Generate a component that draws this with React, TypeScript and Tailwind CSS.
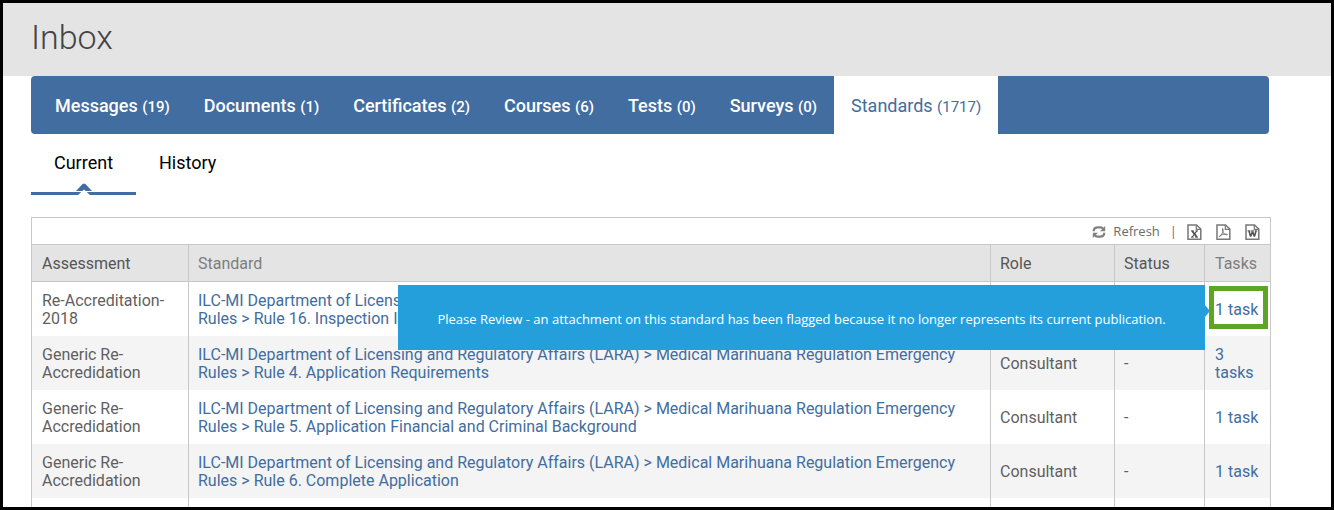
import React from "react";

const tabs = [
  { name: "Messages", count: 19 },
  { name: "Documents", count: 1 },
  { name: "Certificates", count: 2 },
  { name: "Courses", count: 6 },
  { name: "Tests", count: 0 },
  { name: "Surveys", count: 0 },
  { name: "Standards", count: 1717 },
];

const source =
  "ILC-MI Department of Licensing and Regulatory Affairs (LARA) > Medical Marihuana Regulation Emergency Rules > ";

const rows = [
  { assessment: "Re-Accreditation-2018", rule: "Rule 16. Inspection Investigation", tasks: "1 task", flagged: true },
  { assessment: "Generic Re-Accredidation", rule: "Rule 4. Application Requirements", tasks: "3 tasks" },
  { assessment: "Generic Re-Accredidation", rule: "Rule 5. Application Financial and Criminal Background", tasks: "1 task" },
  { assessment: "Generic Re-Accredidation", rule: "Rule 6. Complete Application", tasks: "1 task" },
  { assessment: "", rule: "", tasks: "" },
];

function RefreshIcon() {
  return (
    <svg width="14" height="14" viewBox="0 0 14 14" fill="none" stroke="#808080" strokeWidth="2.2" aria-hidden="true">
      <path d="M1.800 6.200V5.200C2.200 3.200 3.800 2.400 5.500 2.400h3c1.200 0 2 .5 2.700 1.400" />
      <path d="M13.200 1v5.200H8z" fill="#808080" stroke="none" />
      <path d="M12.200 7.800v1c-.4 2-2 2.800-3.700 2.800h-3c-1.200 0-2-.5-2.700-1.400" />
      <path d="M.8 13V7.800H6z" fill="#808080" stroke="none" />
    </svg>
  );
}

function FileIcon({ kind }: { kind: "excel" | "pdf" | "word" }) {
  return (
    <svg width="15" height="16" viewBox="0 0 15 16" fill="none" stroke="#777" strokeWidth="1.500" aria-hidden="true">
      <path d="M1 1h8.500L13.800 5v10.200H1z" />
      <path d="M9.300 1v4.300h4.500" strokeWidth="1.200" />
      {kind === "excel" && (
        <g stroke="#505050">
          <path d="M5.200 7l4.600 6" strokeWidth="2" />
          <path d="M9.800 7l-4.600 6" strokeWidth="1.200" />
          <path d="M4 6.900h2.800M8.400 6.900h2.600M4 13.100h2.600M8.200 13.100H11" strokeWidth="1" />
        </g>
      )}
      {kind === "pdf" && (
        <path
          d="M6.600 4.500c.7 1.600.5 3.100-.1 4.400C5.600 10.800 4.500 12.600 3.400 12.700c-.5-.6 1.300-1.800 3-2.200 2-.5 4.500-.7 5 0 0 .8-2.200.3-3.400-.8C6.900 8.600 6.400 6.500 6.600 4.500z"
          strokeWidth="0.9"
          stroke="#6a6a6a"
        />
      )}
      {kind === "word" && (
        <g stroke="#505050">
          <path d="M4 7l1.600 5.600L7.500 7.400l1.900 5.200L11 7" strokeWidth="1.600" strokeLinejoin="bevel" />
          <path d="M2.500 6.900h3M6 6.900h3M9.700 6.900h2.600" strokeWidth="1" />
        </g>
      )}
    </svg>
  );
}

export default function App() {
  return (
    <div className="h-screen overflow-hidden border-[3px] border-black bg-white font-['Roboto',sans-serif] text-base text-[#5f5f5f]">
      <header className="bg-[#e4e4e4] pt-3.5 pb-4.5 pl-7">
        <h1 className="text-[34px] leading-[41px] font-light text-[#444]">Inbox</h1>
      </header>

      <div className="pr-15 pl-7">
        <nav className="mr-0.5 flex h-[58px] rounded bg-[#426da0] pl-[7px] text-lg font-medium text-white" aria-label="Inbox sections">
          {tabs.map((tab) => (
            <a
              key={tab.name}
              href="#"
              className={
                tab.name === "Standards"
                  ? "flex items-center bg-white px-[17px] pt-px font-normal text-[#426da0]"
                  : "flex items-center px-[17px] pt-px"
              }
            >
              <span>
                {tab.name} <span className="text-[15px]">({tab.count})</span>
              </span>
            </a>
          ))}
        </nav>

        <nav className="mb-[22px] flex text-lg text-black" aria-label="Period">
          <a href="#" className="relative flex h-[61px] w-[105px] justify-center border-b-3 border-[#426da0] pt-[15px]">
            Current
            <svg className="absolute -bottom-[3px] left-[45px]" width="16" height="12" viewBox="0 0 16 12" aria-hidden="true">
              <path d="M0 8L6.800.8h2.400L16 8z" fill="#426da0" />
              <path d="M2 12L8 6.500l6 5.500z" fill="#fff" />
            </svg>
          </a>
          <a href="#" className="ml-[23px] pt-[15px]">
            History
          </a>
        </nav>

        <div className="border border-[#c8c8c8]">
          <div className="flex h-[26px] items-center justify-end pt-px pr-2.5 font-['Open_Sans',sans-serif] text-[13px] text-[#6b6b6b]">
            <button type="button" className="flex items-center gap-[7px]">
              <RefreshIcon />
              Refresh
            </button>
            <span className="mx-2.5">|</span>
            <div className="flex gap-3.5">
              <button type="button" aria-label="Export to Excel"><FileIcon kind="excel" /></button>
              <button type="button" aria-label="Export to PDF"><FileIcon kind="pdf" /></button>
              <button type="button" aria-label="Export to Word"><FileIcon kind="word" /></button>
            </div>
          </div>

          <table className="w-full table-fixed border-separate border-spacing-0 text-left leading-[18px]">
            <colgroup>
              <col className="w-[157px]" />
              <col />
              <col className="w-[124px]" />
              <col className="w-[90px]" />
              <col className="w-[65px]" />
            </colgroup>
            <thead>
              <tr className="bg-[#e4e4e4] text-[#555] *:border-y *:border-[#c8c8c8] *:pt-2.5 *:pb-2 *:pl-[9px] *:font-normal *:first:pl-2.5 *:last:pl-2.5">
                <th className="border-r">Assessment</th>
                <th className="border-r text-[#7d7d7d]">Standard</th>
                <th className="border-r">Role</th>
                <th className="border-r">Status</th>
                <th className="text-[#7d7d7d]">Tasks</th>
              </tr>
            </thead>
            <tbody>
              {rows.map((row, i) => (
                <tr key={i} className="h-[54px] even:bg-[#f4f4f4] *:border-[#c8c8c8] *:pt-2.5 *:pb-2 *:pl-[9px] *:first:pl-2.5 *:last:pl-2.5">
                  <td className="border-r">{row.assessment}</td>
                  <td className="border-r pr-7">
                    {row.rule && (
                      <a href="#" className="text-[#426da0]">
                        {source}
                        {row.rule}
                      </a>
                    )}
                  </td>
                  <td className="border-r">{row.rule && "Consultant"}</td>
                  <td className="border-r">{row.rule && "-"}</td>
                  <td className="relative pr-2">
                    <a href="#" className="text-[#426da0]">{row.tasks}</a>
                    {row.flagged && (
                      <>
                        <span className="absolute top-1 left-1 h-[43px] w-[59px] border-5 border-[#5fa524]" />
                        <div
                          role="tooltip"
                          className="absolute top-[3px] right-[65px] flex h-[65px] w-[807px] items-center justify-center bg-[#259fdc] pt-0.5 font-['Open_Sans',sans-serif] text-[13px] text-white"
                        >
                          Please Review - an attachment on this standard has been flagged because it no longer represents its current publication.
                          <svg className="absolute top-5 left-full" width="5" height="12" viewBox="0 0 5 12" aria-hidden="true">
                            <path d="M0 0l5 6-5 6z" fill="#259fdc" />
                          </svg>
                        </div>
                      </>
                    )}
                  </td>
                </tr>
              ))}
            </tbody>
          </table>
        </div>
      </div>
    </div>
  );
}
